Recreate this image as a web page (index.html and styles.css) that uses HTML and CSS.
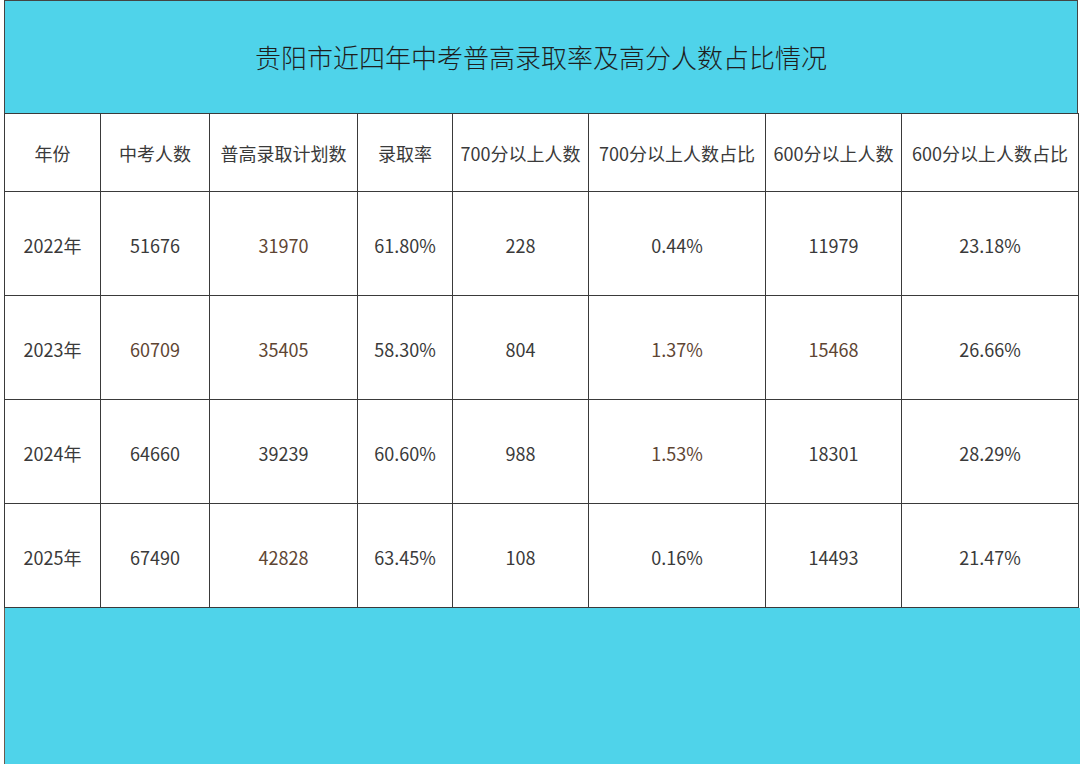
FILE: index.html
```html
<!DOCTYPE html>
<html lang="zh-CN">
<head>
<meta charset="utf-8">
<title>贵阳市近四年中考普高录取率及高分人数占比情况</title>
<link rel="stylesheet" href="styles.css">
</head>
<body>
<div class="page">
  <div class="title-bar">
    <h1 class="title">贵阳市近四年中考普高录取率及高分人数占比情况</h1>
  </div>
  <table class="data">
    <colgroup>
      <col class="c1"><col class="c2"><col class="c3"><col class="c4">
      <col class="c5"><col class="c6"><col class="c7"><col class="c8">
    </colgroup>
    <thead>
      <tr>
        <th>年份</th><th>中考人数</th><th>普高录取计划数</th><th>录取率</th>
        <th>700分以上人数</th><th>700分以上人数占比</th><th>600分以上人数</th><th>600分以上人数占比</th>
      </tr>
    </thead>
    <tbody>
      <tr>
        <td>2022年</td><td>51676</td><td class="brown">31970</td><td>61.80%</td>
        <td>228</td><td>0.44%</td><td>11979</td><td>23.18%</td>
      </tr>
      <tr>
        <td>2023年</td><td class="brown">60709</td><td class="brown">35405</td><td>58.30%</td>
        <td>804</td><td class="brown">1.37%</td><td class="brown">15468</td><td>26.66%</td>
      </tr>
      <tr>
        <td>2024年</td><td>64660</td><td>39239</td><td>60.60%</td>
        <td>988</td><td class="brown">1.53%</td><td>18301</td><td>28.29%</td>
      </tr>
      <tr>
        <td>2025年</td><td>67490</td><td class="brown">42828</td><td>63.45%</td>
        <td>108</td><td>0.16%</td><td>14493</td><td>21.47%</td>
      </tr>
    </tbody>
  </table>
  <div class="footer-bar"></div>
</div>
</body>
</html>
```

FILE: styles.css
```css
html, body {
  margin: 0;
  padding: 0;
  background: #ffffff;
}

.page {
  width: 1080px;
  height: 764px;
  overflow: hidden;
  display: flex;
  flex-direction: column;
  font-family: "Noto Sans CJK SC", sans-serif;
  color: #333333;
}

.title-bar {
  margin-left: 4px;
  width: 1072px;
  height: 112px;
  border: 1px solid #444444;
  border-bottom: none;
  background: #4fd3ea;
  display: flex;
  align-items: center;
  justify-content: center;
}

.title {
  margin: 0;
  padding-bottom: 1px;
  font-family: "Noto Sans CJK SC", sans-serif;
  font-weight: 300;
  font-size: 26px;
  color: #1e1e1e;
}

.data {
  margin-left: 4px;
  width: 1075px;
  border-collapse: collapse;
  table-layout: fixed;
  background: #ffffff;
}

.c1 { width: 96px; }
.c2 { width: 109px; }
.c3 { width: 148px; }
.c4 { width: 95px; }
.c5 { width: 136px; }
.c6 { width: 177px; }
.c7 { width: 136px; }
.c8 { width: 177px; }

.data th,
.data td {
  border: 1px solid #3a3a3a;
  padding: 0;
  text-align: center;
  vertical-align: middle;
  font-family: "Noto Sans CJK SC", sans-serif;
  font-size: 18px;
  font-weight: 400;
  color: #3a3a3a;
  white-space: nowrap;
}

.data th {
  height: 77px;
}

.data td {
  height: 101px;
  padding-top: 2px;
}

.data .brown {
  color: #5e4533;
}

.footer-bar {
  flex: 1;
  margin-left: 4px;
  border-left: 1px solid #6b5a4e;
  background: #4fd3ea;
}
```
